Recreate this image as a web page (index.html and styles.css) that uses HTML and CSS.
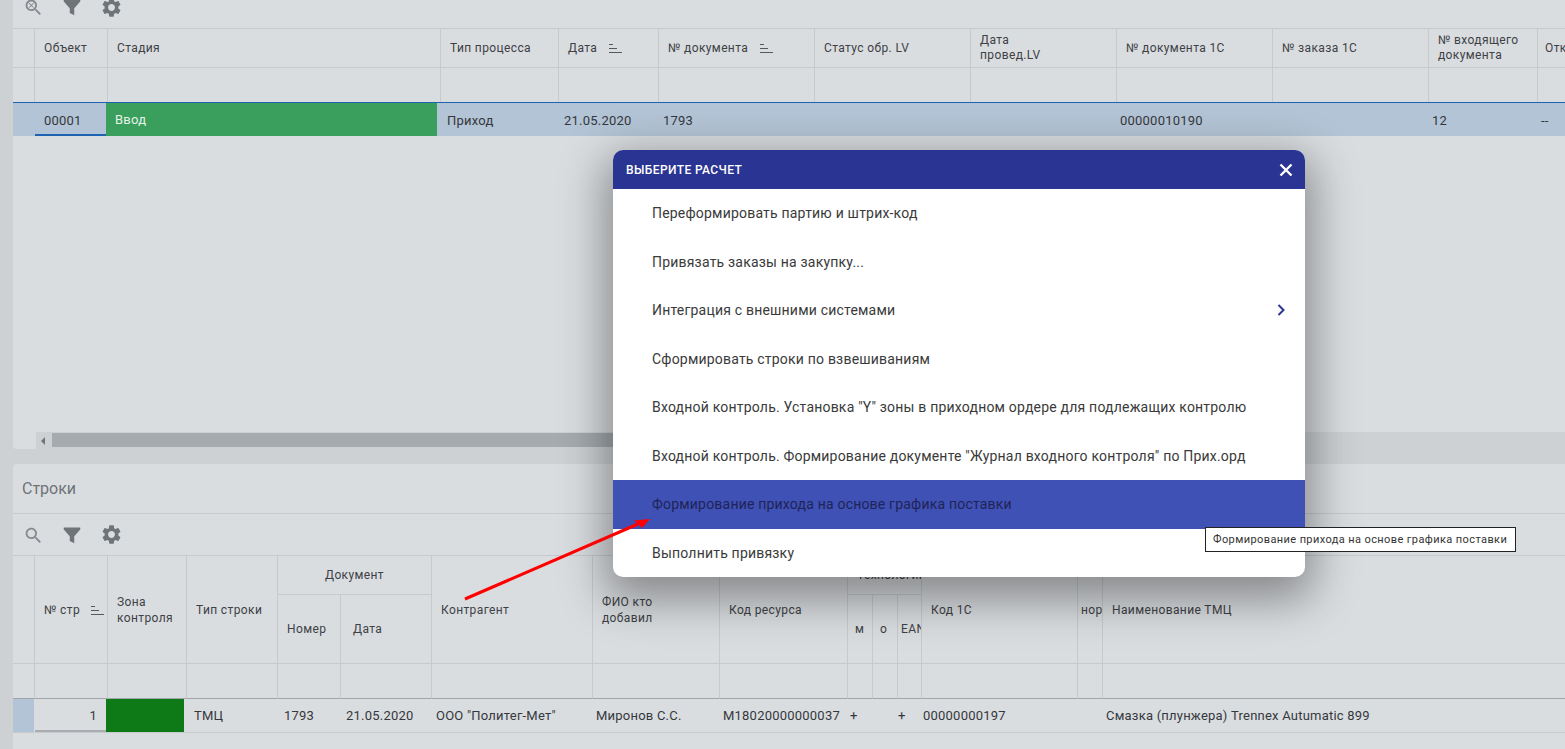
FILE: index.html
```html
<!DOCTYPE html>
<html lang="ru">
<head>
  <meta charset="UTF-8" />
  <title>Приход</title>
  <link rel="stylesheet" href="styles.css">
</head>
<body>

  <svg class="icon-defs" width="0" height="0">
    <symbol id="i-search" viewBox="0 0 24 24">
      <path d="M15.5 14h-.79l-.28-.27C15.41 12.59 16 11.11 16 9.5 16 5.91 13.09 3 9.5 3S3 5.91 3 9.5 5.91 16 9.5 16c1.61 0 3.09-.59 4.23-1.57l.27.28v.79l5 4.99L20.49 19l-4.99-5zm-6 0C7.01 14 5 11.99 5 9.5S7.01 5 9.5 5 14 7.01 14 9.5 11.99 14 9.5 14z"/>
    </symbol>
    <symbol id="i-search-x" viewBox="0 0 24 24">
      <path d="M15.5 14h-.79l-.28-.27C15.41 12.59 16 11.11 16 9.5 16 5.91 13.09 3 9.5 3S3 5.91 3 9.5 5.91 16 9.5 16c1.61 0 3.09-.59 4.23-1.57l.27.28v.79l5 4.99L20.49 19l-4.99-5zm-6 0C7.01 14 5 11.99 5 9.5S7.01 5 9.5 5 14 7.01 14 9.5 11.99 14 9.5 14z"/>
      <path d="M11.6 6.7l.7.7-2.1 2.1 2.1 2.1-.7.7-2.1-2.1-2.1 2.1-.7-.7 2.1-2.1-2.1-2.1.7-.7 2.1 2.1z"/>
    </symbol>
    <symbol id="i-filter" viewBox="0 0 24 24">
      <path d="M1 2h22v2.5l-8 9V23l-6-3v-6.5l-8-9z"/>
    </symbol>
    <symbol id="i-gear" viewBox="0 0 24 24">
      <path d="M19.14 12.94c.04-.3.06-.61.06-.94 0-.32-.02-.64-.07-.94l2.03-1.58c.18-.14.23-.41.12-.61l-1.92-3.32c-.12-.22-.37-.29-.59-.22l-2.39.96c-.5-.38-1.03-.7-1.62-.94l-.36-2.54c-.04-.24-.24-.41-.48-.41h-3.84c-.24 0-.43.17-.47.41l-.36 2.54c-.59.24-1.13.57-1.62.94l-2.39-.96c-.22-.08-.47 0-.59.22L2.74 8.87c-.12.21-.08.47.12.61l2.03 1.58c-.05.3-.09.63-.09.94s.02.64.07.94l-2.03 1.58c-.18.14-.23.41-.12.61l1.92 3.32c.12.22.37.29.59.22l2.39-.96c.5.38 1.03.7 1.62.94l.36 2.54c.05.24.24.41.48.41h3.84c.24 0 .44-.17.47-.41l.36-2.54c.59-.24 1.13-.56 1.62-.94l2.39.96c.22.08.47 0 .59-.22l1.92-3.32c.12-.22.07-.47-.12-.61l-2.01-1.58zM12 15.6c-1.98 0-3.6-1.62-3.6-3.6s1.62-3.6 3.6-3.6 3.6 1.62 3.6 3.6-1.62 3.6-3.6 3.6z"/>
    </symbol>
    <symbol id="i-sort" viewBox="0 0 14 9">
      <path d="M0 0h4v1H0zM0 4h8v1H0zM0 8h13v1H0z"/>
    </symbol>
  </svg>

  <section class="panel panel-top">
    <div class="toolbar toolbar-cut">
      <span class="tool tool-light"><svg class="ico-search"><use href="#i-search-x"/></svg></span>
      <span class="tool"><svg class="ico-filter"><use href="#i-filter"/></svg></span>
      <span class="tool"><svg class="ico-gear"><use href="#i-gear"/></svg></span>
    </div>

    <div class="table-wrap">
      <table class="grid grid-top">
        <colgroup>
          <col class="c22"><col class="c73"><col class="c333"><col class="c118"><col class="c100">
          <col class="c156"><col class="c156"><col class="c146"><col class="c156"><col class="c156">
          <col class="c109"><col class="c60">
        </colgroup>
        <tr class="row-head">
          <th class="th-mark"></th>
          <th>Объект</th>
          <th>Стадия</th>
          <th>Тип процесса</th>
          <th>Дата <svg class="ico-sort"><use href="#i-sort"/></svg></th>
          <th>№ документа <svg class="ico-sort"><use href="#i-sort"/></svg></th>
          <th>Статус обр. LV</th>
          <th>Дата<br>провед.LV</th>
          <th>№ документа 1С</th>
          <th>№ заказа 1С</th>
          <th>№ входящего<br>документа</th>
          <th class="th-last">Отк</th>
        </tr>
        <tr class="row-filter">
          <td></td><td></td><td></td><td></td><td></td><td></td>
          <td></td><td></td><td></td><td></td><td></td><td></td>
        </tr>
        <tr class="row-data row-selected">
          <td></td>
          <td class="cell-key">00001</td>
          <td class="cell-fill"><div class="stage stage-green">Ввод</div></td>
          <td class="pad-6">Приход</td>
          <td class="pad-5">21.05.2020</td>
          <td class="pad-4">1793</td>
          <td></td>
          <td></td>
          <td class="pad-3">00000010190</td>
          <td></td>
          <td class="pad-3">12</td>
          <td class="pad-3">--</td>
        </tr>
      </table>
    </div>
  </section>

  <div class="hscroll">
    <div class="hscroll-corner"></div>
    <div class="hscroll-btn"></div>
    <div class="hscroll-thumb"></div>
  </div>

  <section class="panel panel-bottom">
    <h2 class="panel-title">Строки</h2>
    <div class="toolbar">
      <span class="tool tool-light"><svg class="ico-search"><use href="#i-search"/></svg></span>
      <span class="tool"><svg class="ico-filter"><use href="#i-filter"/></svg></span>
      <span class="tool"><svg class="ico-gear"><use href="#i-gear"/></svg></span>
    </div>

    <div class="table-wrap">
      <table class="grid grid-bottom">
        <colgroup>
          <col class="c22"><col class="c73"><col class="c79"><col class="c91"><col class="c63"><col class="c91">
          <col class="c161"><col class="c127"><col class="c128"><col class="c25"><col class="c25"><col class="c24">
          <col class="c156"><col class="c25"><col class="c480">
        </colgroup>
        <tr class="row-group">
          <th rowspan="2" class="th-mark"></th>
          <th rowspan="2">№ стр <svg class="ico-sort"><use href="#i-sort"/></svg></th>
          <th rowspan="2">Зона<br>контроля</th>
          <th rowspan="2">Тип строки</th>
          <th colspan="2" class="th-center">Документ</th>
          <th rowspan="2">Контрагент</th>
          <th rowspan="2">ФИО кто<br>добавил</th>
          <th rowspan="2">Код ресурса</th>
          <th colspan="3">Технологии</th>
          <th rowspan="2">Код 1С</th>
          <th rowspan="2" class="th-narrow">нор</th>
          <th rowspan="2">Наименование ТМЦ</th>
        </tr>
        <tr class="row-sub">
          <th>Номер</th>
          <th class="th-date">Дата</th>
          <th class="th-tiny">м</th>
          <th class="th-tiny">о</th>
          <th class="th-narrow">EAN</th>
        </tr>
        <tr class="row-filter">
          <td></td><td></td><td></td><td></td><td></td><td></td><td></td><td></td>
          <td></td><td></td><td></td><td></td><td></td><td></td><td></td>
        </tr>
        <tr class="row-data">
          <td class="cell-mark"></td>
          <td class="cell-num">1</td>
          <td class="cell-fill"><div class="stage stage-dark"></div></td>
          <td class="pad-7">ТМЦ</td>
          <td class="pad-6">1793</td>
          <td class="pad-5">21.05.2020</td>
          <td class="pad-4">ООО "Политег-Мет"</td>
          <td class="pad-3">Миронов С.С.</td>
          <td class="pad-3">M18020000000037</td>
          <td class="pad-2">+</td>
          <td></td>
          <td>+</td>
          <td class="pad-1">00000000197</td>
          <td></td>
          <td class="pad-3">Смазка (плунжера) Trennex Autumatic 899</td>
        </tr>
      </table>
    </div>
  </section>

  <!-- окно выбора расчета -->
  <div class="dialog">
    <div class="dialog-head">
      <span>Выберите расчет</span>
      <svg class="dialog-close" viewBox="0 0 14 14"><path d="M1.5 1.5l11 11M12.5 1.5l-11 11"/></svg>
    </div>
    <ul class="dialog-list">
      <li>Переформировать партию и штрих-код</li>
      <li>Привязать заказы на закупку...</li>
      <li>Интеграция с внешними системами
        <svg class="dialog-more" viewBox="0 0 8 12"><path d="M1.5 1l5 5-5 5"/></svg>
      </li>
      <li>Сформировать строки по взвешиваниям</li>
      <li>Входной контроль. Установка "Y" зоны в приходном ордере для подлежащих контролю</li>
      <li>Входной контроль. Формирование документе "Журнал входного контроля" по Прих.орд</li>
      <li class="active">Формирование прихода на основе графика поставки</li>
      <li>Выполнить привязку</li>
    </ul>
  </div>

  <div class="tooltip">Формирование прихода на основе графика поставки</div>

  <svg class="red-arrow" viewBox="0 0 200 90">
    <path class="red-arrow-line" d="M2 82L175 7"/>
    <path class="red-arrow-head" d="M187 2L171 3.5L179 11z"/>
  </svg>

</body>
</html>
```

FILE: styles.css
```css
* {
  box-sizing: border-box;
  font-family: 'Roboto', sans-serif;
}

html, body {
  margin: 0;
  height: 749px;
  overflow: hidden;
}

body {
  position: relative;
  display: flex;
  flex-direction: column;
  padding-left: 13px;
  background-color: #cdd1d4;
  color: #34383c;
  font-size: 13px;
}

.icon-defs {
  position: absolute;
}

.panel {
  background-color: #dadde0;
  overflow: hidden;
}

.panel-top {
  height: 432px;
  flex: none;
}

.panel-bottom {
  flex: 1;
  border-top-left-radius: 4px;
}

.panel-title {
  margin: 0;
  height: 50px;
  padding-left: 9px;
  line-height: 49px;
  font-size: 16px;
  font-weight: 400;
  color: #6e7377;
  border-bottom: 1px solid #c6cacd;
}

/* toolbar */
.toolbar {
  display: flex;
  align-items: center;
  height: 42px;
  padding-left: 1px;
  border-bottom: 1px solid #c6cacd;
  overflow: hidden;
}

.toolbar-cut {
  height: 29px;
  align-items: flex-end;
  padding-bottom: 9px;
}

.tool {
  flex: none;
  display: flex;
  align-items: center;
  justify-content: center;
  width: 39px;
  height: 24px;
  fill: #6f7478;
}

.tool-light {
  fill: #85898d;
}

.ico-search {
  width: 21px;
  height: 21px;
  margin-top: 1px;
}

.ico-filter {
  width: 18px;
  height: 18px;
  margin-right: 2px;
}

.ico-gear {
  width: 23px;
  height: 23px;
}

.ico-sort {
  width: 14px;
  height: 9px;
  margin-left: 8px;
  fill: #55595d;
  vertical-align: -1px;
}

/* tables */
.table-wrap {
  overflow: hidden;
}

.grid {
  table-layout: fixed;
  border-collapse: separate;
  border-spacing: 0;
}

.grid-top {
  width: 1585px;
}

.grid-bottom {
  width: 1570px;
}

.grid th,
.grid td {
  padding: 0;
  overflow: hidden;
  white-space: nowrap;
  font-weight: 400;
  text-align: left;
}

.grid th {
  padding-left: 9px;
  font-size: 12px;
  line-height: 16px;
  letter-spacing: .38px;
  color: #3d4145;
  border-right: 1px solid #c6cacd;
  border-bottom: 1px solid #c6cacd;
}

.grid th.th-mark {
  padding: 0;
}

.grid th.th-last {
  padding-left: 7px;
}

.row-head th {
  height: 39px;
  line-height: 15px;
}

.row-filter td {
  height: 34px;
  border-right: 1px solid #c6cacd;
}

.row-data td {
  height: 34px;
  font-size: 13px;
  letter-spacing: .22px;
  vertical-align: middle;
  color: #34383c;
}

.row-selected td {
  padding-top: 1px;
  background-color: #b3c4d6;
  border-top: 1px solid #1e63b0;
}

.cell-key {
  padding-left: 9px !important;
  box-shadow: inset 0 -2px 0 #1e63b0;
}

.grid .cell-fill {
  padding: 0;
  overflow: visible;
}

.stage {
  height: 33px;
  margin: 0 4px 0 -2px;
  padding-left: 9px;
  line-height: 34px;
  color: #e4f2e8;
}

.stage-green {
  background-color: #3a9e5c;
}

.stage-dark {
  margin-right: 3px;
  background-color: #0e7a17;
}

.pad-1 { padding-left: 1px !important; }
.pad-2 { padding-left: 2px !important; }
.pad-3 { padding-left: 3px !important; }
.pad-4 { padding-left: 4px !important; }
.pad-5 { padding-left: 5px !important; }
.pad-6 { padding-left: 6px !important; }
.pad-7 { padding-left: 7px !important; }

/* bottom grid */
.row-group th {
  height: 39px;
}

.row-sub th {
  height: 69px;
}

.grid th.th-center {
  padding-left: 0;
  text-align: center;
}

.grid th.th-date {
  padding-left: 12px;
}

.grid th.th-narrow {
  padding-left: 3px;
}

.grid th.th-tiny {
  padding-left: 7px;
}

.grid-bottom .row-filter td {
  height: 35px;
  border-bottom: 1px solid #a2a6aa;
}

.grid-bottom .row-data td {
  border-bottom: 1px solid #c6cacd;
}

.grid-bottom .row-data .cell-mark {
  background-color: #b3c4d6;
  border-right: 1px solid #dadde0;
}

.grid .cell-num {
  padding-right: 11px;
  text-align: right;
  box-shadow: inset 0 -2px 0 #a9adb1;
}

/* column widths */
.c22 { width: 22px; }
.c24 { width: 24px; }
.c25 { width: 25px; }
.c60 { width: 60px; }
.c63 { width: 63px; }
.c73 { width: 73px; }
.c79 { width: 79px; }
.c91 { width: 91px; }
.c100 { width: 100px; }
.c109 { width: 109px; }
.c118 { width: 118px; }
.c127 { width: 127px; }
.c128 { width: 128px; }
.c146 { width: 146px; }
.c156 { width: 156px; }
.c161 { width: 161px; }
.c333 { width: 333px; }
.c480 { width: 480px; }

/* horizontal scrollbar */
.hscroll {
  flex: none;
  display: flex;
  height: 17px;
  margin-bottom: 15px;
}

.hscroll-corner {
  width: 23px;
  background-color: #dadde0;
  border-bottom-left-radius: 4px;
}

.hscroll-btn {
  position: relative;
  width: 16px;
}

.hscroll-btn::before {
  content: "";
  position: absolute;
  top: 5px;
  left: 5px;
  border-style: solid;
  border-width: 4px 4px 4px 0;
  border-color: transparent #6f7478 transparent transparent;
}

.hscroll-thumb {
  width: 850px;
  height: 14px;
  margin-top: 1px;
  background-color: #a6abaf;
}

/* dialog */
.dialog {
  position: absolute;
  left: 613px;
  top: 150px;
  width: 692px;
  height: 427px;
  background: #fff;
  border-radius: 10px;
  overflow: hidden;
  box-shadow: 0 15px 45px 8px rgba(0,0,0,0.38);
}

.dialog-head {
  display: flex;
  align-items: center;
  justify-content: space-between;
  height: 39px;
  padding: 0 12px 0 13px;
  background-color: #2a3492;
  color: #fff;
  font-size: 12px;
  font-weight: 500;
  letter-spacing: .4px;
  text-transform: uppercase;
}

.dialog-close {
  width: 14px;
  height: 14px;
  fill: none;
  stroke: #fff;
  stroke-width: 2.4;
}

.dialog-list {
  list-style: none;
  margin: 0;
  padding: 0;
}

.dialog-list li {
  position: relative;
  height: 48.55px;
  padding-left: 39px;
  line-height: 48px;
  font-size: 14px;
  letter-spacing: .2px;
  color: #3a3a3a;
}

.dialog-list li.active {
  background-color: #3f51b5;
  color: #1e2458;
}

.dialog-more {
  position: absolute;
  right: 20px;
  top: 18px;
  width: 8px;
  height: 12px;
  fill: none;
  stroke: #2a3492;
  stroke-width: 2;
}

.tooltip {
  position: absolute;
  left: 1205px;
  top: 527px;
  width: 311px;
  height: 25px;
  padding-left: 7px;
  line-height: 23px;
  font-size: 11px;
  letter-spacing: .4px;
  color: #333;
  background: #fff;
  border: 1px solid #222;
}

.red-arrow {
  position: absolute;
  left: 463px;
  top: 517px;
  width: 200px;
  height: 90px;
  overflow: visible;
}

.red-arrow-line {
  fill: none;
  stroke: #f00;
  stroke-width: 3;
}

.red-arrow-head {
  fill: #f00;
}
```
